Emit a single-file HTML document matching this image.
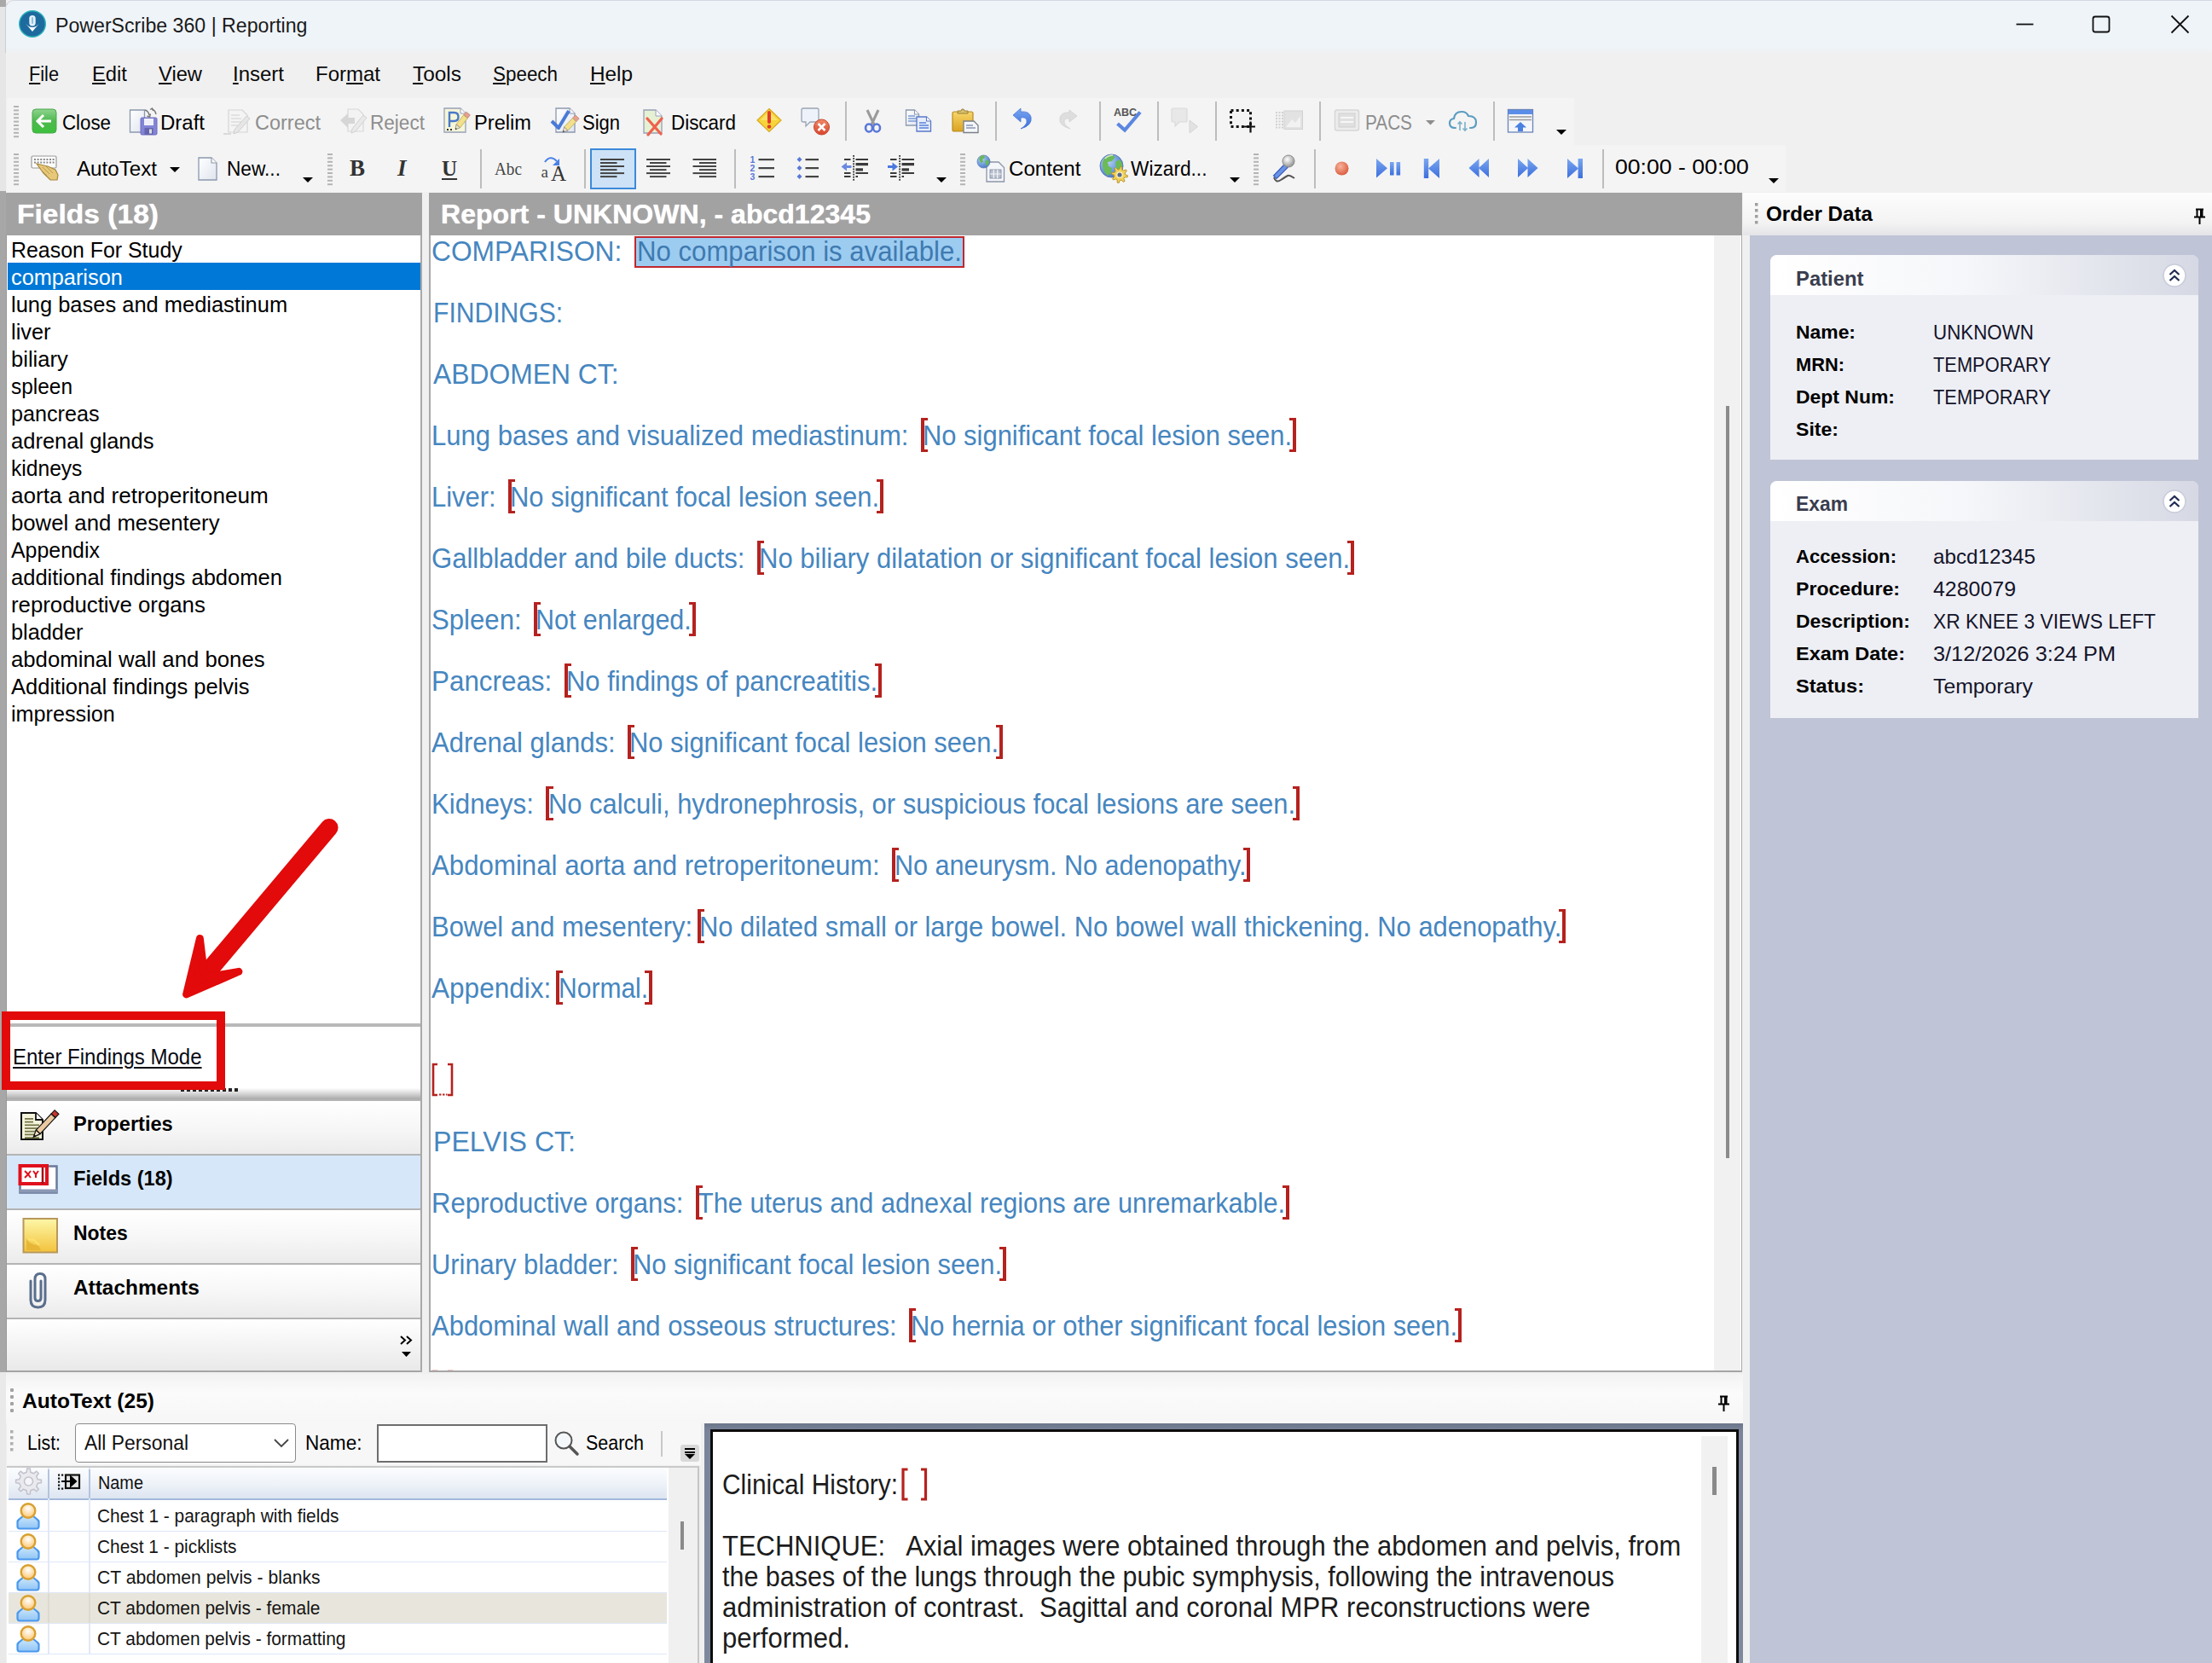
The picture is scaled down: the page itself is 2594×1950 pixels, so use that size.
<!DOCTYPE html>
<html><head><meta charset="utf-8"><title>PowerScribe 360 | Reporting</title><style>html,body{margin:0;padding:0;background:#f0f0f0;}
body{width:2594px;height:1950px;overflow:hidden;position:relative;font-family:"Liberation Sans",sans-serif;}
.r{position:absolute;display:block;}
.t{position:absolute;white-space:pre;transform-origin:0 50%;}
u{text-decoration:underline;text-decoration-thickness:2px;text-underline-offset:2px;}
</style></head><body>
<div class="r" style="left:0px;top:0px;width:2594px;height:1950px;background:#f0f0f0;"></div>
<div class="r" style="left:0px;top:0px;width:7px;height:8px;background:#a9a9a9;"></div>
<div class="r" style="left:0px;top:8px;width:7px;height:216px;background:#e6e6e6;"></div>
<div class="r" style="left:0px;top:224px;width:7px;height:1385px;background:#a7a7a7;"></div>
<div class="r" style="left:0px;top:1609px;width:7px;height:341px;background:#e9e9e9;"></div>
<div class="r" style="left:6px;top:0px;width:2588px;height:62px;background:linear-gradient(#eff4f9 0,#eff4f9 54px,#f0f0f0 62px);border-top-left-radius:10px;border-left:1px solid #c9ced6;border-top:1px solid #d5dae2;box-sizing:border-box;"></div>
<svg class="r" style="left:22px;top:12px;" width="34" height="34" viewBox="0 0 34 34"><circle cx="16" cy="16" r="15.3" fill="#1d6a9e" stroke="#2bb3bb" stroke-width="1.4"/><rect x="12.3" y="6" width="7.4" height="12.5" rx="3.7" fill="#e6f1fa"/><rect x="15" y="8" width="2" height="8" rx="1" fill="#8fc0e4"/><path d="M8 15.5q8 9 16 0l-8 9.5z" fill="#fff"/></svg>
<div class="t" style="left:65.0px;top:17.5px;font-size:24.6px;line-height:24.6px;color:#1a1a1a;transform:scaleX(0.9410);">PowerScribe 360 | Reporting</div>
<svg class="r" style="left:2350px;top:8px;" width="230" height="44" viewBox="0 0 230 44"><path d="M14.5 20.5h20" stroke="#111" stroke-width="1.8" fill="none"/><rect x="104.5" y="11.5" width="19" height="18" rx="2.5" fill="none" stroke="#111" stroke-width="1.8"/><path d="M196.5 10.5l20 20M216.5 10.5l-20 20" stroke="#111" stroke-width="1.8" fill="none"/></svg>
<div class="t" style="left:34.0px;top:75.1px;font-size:24.6px;line-height:24.6px;color:#0a0a0a;transform:scaleX(0.8837);"><u>F</u>ile</div>
<div class="t" style="left:108.0px;top:75.1px;font-size:24.6px;line-height:24.6px;color:#0a0a0a;transform:scaleX(0.9662);"><u>E</u>dit</div>
<div class="t" style="left:186.0px;top:75.1px;font-size:24.6px;line-height:24.6px;color:#0a0a0a;transform:scaleX(0.9643);"><u>V</u>iew</div>
<div class="t" style="left:273.0px;top:75.1px;font-size:24.6px;line-height:24.6px;color:#0a0a0a;transform:scaleX(0.9756);"><u>I</u>nsert</div>
<div class="t" style="left:370.0px;top:75.1px;font-size:24.6px;line-height:24.6px;color:#0a0a0a;transform:scaleX(0.9761);">For<u>m</u>at</div>
<div class="t" style="left:484.0px;top:75.1px;font-size:24.6px;line-height:24.6px;color:#0a0a0a;transform:scaleX(0.9923);"><u>T</u>ools</div>
<div class="t" style="left:578.0px;top:75.1px;font-size:24.6px;line-height:24.6px;color:#0a0a0a;transform:scaleX(0.9113);"><u>S</u>peech</div>
<div class="t" style="left:692.0px;top:75.1px;font-size:24.6px;line-height:24.6px;color:#0a0a0a;transform:scaleX(0.9891);"><u>H</u>elp</div>
<div class="r" style="left:8px;top:115px;width:1838px;height:55px;background:#f4f4f4;"></div>
<div class="r" style="left:8px;top:170px;width:2086px;height:55px;background:#f4f4f4;"></div>
<svg class="r" style="left:16px;top:124px;" width="7" height="40" viewBox="0 0 7 40"><rect x="0" y="0.0" width="6" height="2" fill="#b4b4b4"/><rect x="0" y="4.4" width="6" height="2" fill="#b4b4b4"/><rect x="0" y="8.8" width="6" height="2" fill="#b4b4b4"/><rect x="0" y="13.2" width="6" height="2" fill="#b4b4b4"/><rect x="0" y="17.6" width="6" height="2" fill="#b4b4b4"/><rect x="0" y="22.0" width="6" height="2" fill="#b4b4b4"/><rect x="0" y="26.4" width="6" height="2" fill="#b4b4b4"/><rect x="0" y="30.8" width="6" height="2" fill="#b4b4b4"/><rect x="0" y="35.2" width="6" height="2" fill="#b4b4b4"/></svg>
<svg class="r" style="left:16px;top:180px;" width="7" height="40" viewBox="0 0 7 40"><rect x="0" y="0.0" width="6" height="2" fill="#b4b4b4"/><rect x="0" y="4.4" width="6" height="2" fill="#b4b4b4"/><rect x="0" y="8.8" width="6" height="2" fill="#b4b4b4"/><rect x="0" y="13.2" width="6" height="2" fill="#b4b4b4"/><rect x="0" y="17.6" width="6" height="2" fill="#b4b4b4"/><rect x="0" y="22.0" width="6" height="2" fill="#b4b4b4"/><rect x="0" y="26.4" width="6" height="2" fill="#b4b4b4"/><rect x="0" y="30.8" width="6" height="2" fill="#b4b4b4"/><rect x="0" y="35.2" width="6" height="2" fill="#b4b4b4"/></svg>
<svg class="r" style="left:384px;top:180px;" width="7" height="40" viewBox="0 0 7 40"><rect x="0" y="0.0" width="6" height="2" fill="#b4b4b4"/><rect x="0" y="4.4" width="6" height="2" fill="#b4b4b4"/><rect x="0" y="8.8" width="6" height="2" fill="#b4b4b4"/><rect x="0" y="13.2" width="6" height="2" fill="#b4b4b4"/><rect x="0" y="17.6" width="6" height="2" fill="#b4b4b4"/><rect x="0" y="22.0" width="6" height="2" fill="#b4b4b4"/><rect x="0" y="26.4" width="6" height="2" fill="#b4b4b4"/><rect x="0" y="30.8" width="6" height="2" fill="#b4b4b4"/><rect x="0" y="35.2" width="6" height="2" fill="#b4b4b4"/></svg>
<svg class="r" style="left:1126px;top:180px;" width="7" height="40" viewBox="0 0 7 40"><rect x="0" y="0.0" width="6" height="2" fill="#b4b4b4"/><rect x="0" y="4.4" width="6" height="2" fill="#b4b4b4"/><rect x="0" y="8.8" width="6" height="2" fill="#b4b4b4"/><rect x="0" y="13.2" width="6" height="2" fill="#b4b4b4"/><rect x="0" y="17.6" width="6" height="2" fill="#b4b4b4"/><rect x="0" y="22.0" width="6" height="2" fill="#b4b4b4"/><rect x="0" y="26.4" width="6" height="2" fill="#b4b4b4"/><rect x="0" y="30.8" width="6" height="2" fill="#b4b4b4"/><rect x="0" y="35.2" width="6" height="2" fill="#b4b4b4"/></svg>
<svg class="r" style="left:1470px;top:180px;" width="7" height="40" viewBox="0 0 7 40"><rect x="0" y="0.0" width="6" height="2" fill="#b4b4b4"/><rect x="0" y="4.4" width="6" height="2" fill="#b4b4b4"/><rect x="0" y="8.8" width="6" height="2" fill="#b4b4b4"/><rect x="0" y="13.2" width="6" height="2" fill="#b4b4b4"/><rect x="0" y="17.6" width="6" height="2" fill="#b4b4b4"/><rect x="0" y="22.0" width="6" height="2" fill="#b4b4b4"/><rect x="0" y="26.4" width="6" height="2" fill="#b4b4b4"/><rect x="0" y="30.8" width="6" height="2" fill="#b4b4b4"/><rect x="0" y="35.2" width="6" height="2" fill="#b4b4b4"/></svg>
<div class="r" style="left:991px;top:119px;width:1.5px;height:46px;background:#bdbdbd;"></div>
<div class="r" style="left:1167px;top:119px;width:1.5px;height:46px;background:#bdbdbd;"></div>
<div class="r" style="left:1289px;top:119px;width:1.5px;height:46px;background:#bdbdbd;"></div>
<div class="r" style="left:1357px;top:119px;width:1.5px;height:46px;background:#bdbdbd;"></div>
<div class="r" style="left:1425px;top:119px;width:1.5px;height:46px;background:#bdbdbd;"></div>
<div class="r" style="left:1547px;top:119px;width:1.5px;height:46px;background:#bdbdbd;"></div>
<div class="r" style="left:1751px;top:119px;width:1.5px;height:46px;background:#bdbdbd;"></div>
<div class="r" style="left:563px;top:175px;width:1.5px;height:46px;background:#bdbdbd;"></div>
<div class="r" style="left:685px;top:175px;width:1.5px;height:46px;background:#bdbdbd;"></div>
<div class="r" style="left:861px;top:175px;width:1.5px;height:46px;background:#bdbdbd;"></div>
<div class="r" style="left:1541px;top:175px;width:1.5px;height:46px;background:#bdbdbd;"></div>
<div class="r" style="left:1879px;top:175px;width:1.5px;height:46px;background:#bdbdbd;"></div>
<div class="t" style="left:73.0px;top:131.9px;font-size:24.6px;line-height:24.6px;color:#000;transform:scaleX(0.9069);">Close</div>
<div class="t" style="left:188.0px;top:131.9px;font-size:24.6px;line-height:24.6px;color:#000;transform:scaleX(0.9764);">Draft</div>
<div class="t" style="left:299.0px;top:131.9px;font-size:24.6px;line-height:24.6px;color:#8d8d8d;transform:scaleX(0.9543);">Correct</div>
<div class="t" style="left:434.0px;top:131.9px;font-size:24.6px;line-height:24.6px;color:#8d8d8d;transform:scaleX(0.9177);">Reject</div>
<div class="t" style="left:556.0px;top:131.9px;font-size:24.6px;line-height:24.6px;color:#000;transform:scaleX(0.9607);">Prelim</div>
<div class="t" style="left:683.0px;top:131.9px;font-size:24.6px;line-height:24.6px;color:#000;transform:scaleX(0.8943);">Sign</div>
<div class="t" style="left:787.0px;top:131.9px;font-size:24.6px;line-height:24.6px;color:#000;transform:scaleX(0.9113);">Discard</div>
<div class="t" style="left:1601.0px;top:131.9px;font-size:24.6px;line-height:24.6px;color:#8d8d8d;transform:scaleX(0.8437);">PACS</div>
<svg class="r" style="left:1672px;top:141px;" width="11" height="6.5" viewBox="0 0 11 6.5"><path d="M0 0h11l-5.5 5.5z" fill="#8d8d8d"/></svg>
<svg class="r" style="left:1825px;top:152px;" width="12" height="7.0" viewBox="0 0 12 7.0"><path d="M0 0h12l-6.0 6.0z" fill="#000"/></svg>
<div class="t" style="left:90.0px;top:185.6px;font-size:24.6px;line-height:24.6px;color:#000;transform:scaleX(0.9823);">AutoText</div>
<div class="t" style="left:266.0px;top:185.6px;font-size:24.6px;line-height:24.6px;color:#000;transform:scaleX(0.9212);">New...</div>
<div class="t" style="left:1183.0px;top:185.6px;font-size:24.6px;line-height:24.6px;color:#000;transform:scaleX(0.9800);">Content</div>
<div class="t" style="left:1325.5px;top:185.6px;font-size:24.6px;line-height:24.6px;color:#000;transform:scaleX(0.9222);">Wizard...</div>
<div class="t" style="left:1894.0px;top:184.1px;font-size:24.6px;line-height:24.6px;color:#000;transform:scaleX(1.0826);">00:00 - 00:00</div>
<svg class="r" style="left:199px;top:196px;" width="12" height="7.0" viewBox="0 0 12 7.0"><path d="M0 0h12l-6.0 6.0z" fill="#000"/></svg>
<svg class="r" style="left:355px;top:208px;" width="12" height="7.0" viewBox="0 0 12 7.0"><path d="M0 0h12l-6.0 6.0z" fill="#000"/></svg>
<svg class="r" style="left:1098px;top:208px;" width="12" height="7.0" viewBox="0 0 12 7.0"><path d="M0 0h12l-6.0 6.0z" fill="#000"/></svg>
<svg class="r" style="left:1442px;top:208px;" width="12" height="7.0" viewBox="0 0 12 7.0"><path d="M0 0h12l-6.0 6.0z" fill="#000"/></svg>
<svg class="r" style="left:2074px;top:209px;" width="12" height="7.0" viewBox="0 0 12 7.0"><path d="M0 0h12l-6.0 6.0z" fill="#000"/></svg>
<div class="t" style="left:410.0px;top:184.1px;font-size:27px;line-height:27px;color:#333;font-weight:700;font-family:'Liberation Serif', serif;">B</div>
<div class="t" style="left:466.0px;top:184.1px;font-size:27px;line-height:27px;color:#333;font-weight:700;font-style:italic;font-family:'Liberation Serif', serif;">I</div>
<div class="t" style="left:518.0px;top:184.8px;font-size:25px;line-height:25px;color:#333;font-weight:700;font-family:'Liberation Serif', serif;text-decoration:underline;text-underline-offset:3px;text-decoration-thickness:2px;">U</div>
<div class="t" style="left:580.0px;top:188.2px;font-size:21px;line-height:21px;color:#444;font-family:'Liberation Serif', serif;transform:scaleX(0.9146);">Abc</div>
<div class="r" style="left:692px;top:174px;width:54px;height:48px;background:#cde2f6;border:2px solid #3b8ad9;box-sizing:border-box;"></div>
<svg class="r" style="left:0;top:0" width="2100" height="230" viewBox="0 0 2100 230"><defs>
<linearGradient id="gGreen" x1="0" y1="0" x2="0" y2="1"><stop offset="0" stop-color="#8fd48f"/><stop offset=".5" stop-color="#4db84d"/><stop offset="1" stop-color="#3cc23c"/></linearGradient>
<linearGradient id="gPage" x1="0" y1="0" x2="1" y2="1"><stop offset="0" stop-color="#ffffff"/><stop offset="1" stop-color="#dfe5ee"/></linearGradient>
<linearGradient id="gBlue" x1="0" y1="0" x2="0" y2="1"><stop offset="0" stop-color="#7aa6f0"/><stop offset="1" stop-color="#3b6fdc"/></linearGradient>
<linearGradient id="gYel" x1="0" y1="0" x2="0" y2="1"><stop offset="0" stop-color="#fdf7a8"/><stop offset="1" stop-color="#f3c23c"/></linearGradient>
<linearGradient id="gClip" x1="0" y1="0" x2="0" y2="1"><stop offset="0" stop-color="#f7d66a"/><stop offset="1" stop-color="#dba321"/></linearGradient>
<radialGradient id="gRec" cx=".4" cy=".35" r=".7"><stop offset="0" stop-color="#f7b49c"/><stop offset="1" stop-color="#d9583a"/></radialGradient>
<radialGradient id="gGlobe" cx=".35" cy=".3" r=".8"><stop offset="0" stop-color="#b8d4f4"/><stop offset=".6" stop-color="#6a98dc"/><stop offset="1" stop-color="#4a70b8"/></radialGradient>
<radialGradient id="gHead" cx=".5" cy=".35" r=".7"><stop offset="0" stop-color="#ffffff"/><stop offset="1" stop-color="#ffc060"/></radialGradient>
<linearGradient id="gBody" x1="0" y1="0" x2="0" y2="1"><stop offset="0" stop-color="#cfe8fb"/><stop offset="1" stop-color="#8fc4f6"/></linearGradient>
<radialGradient id="gMic" cx=".4" cy=".35" r=".7"><stop offset="0" stop-color="#ffffff"/><stop offset="1" stop-color="#8c8c8c"/></radialGradient>
<linearGradient id="gRedc" x1="0" y1="0" x2="0" y2="1"><stop offset="0" stop-color="#f08a6a"/><stop offset="1" stop-color="#d9452e"/></linearGradient>
</defs><rect x="38" y="128" width="28" height="28" rx="4" fill="url(#gGreen)" stroke="#4aa84a" stroke-width="1"/><path d="M60 142H45M51 135l-7 7 7 7" stroke="#fff" stroke-width="3" fill="none"/><path d="M152.5 129h17l0 0v26h-17z" fill="url(#gPage)" stroke="#8c98ae" stroke-width="1.3"/><path d="M169.5 129v0h0" fill="#fff" stroke="#8c98ae" stroke-width="1.1"/><rect x="165" y="138" width="19" height="20" rx="1.5" fill="#8484d6" stroke="#6a6ac0" stroke-width="1"/><rect x="169" y="139" width="11" height="8" fill="#f0f0fb"/><rect x="169.5" y="150" width="10" height="8" fill="#6464b0"/><rect x="175" y="151.5" width="3" height="5" fill="#ddd"/><path d="M170 129q4 1 5 6M172.5 136l3 1 1-3.5M183 134q-1-5-5-6M176 128.5l2.5-1.5 1 3" stroke="#777" stroke-width="1.4" fill="none"/><path d="M268 129h16l6 6v20h-22z" fill="#f4f4f4" stroke="#d4d4d4" stroke-width="1.2"/><path d="M271 135h10M271 139h12M271 143h12M271 147h9" stroke="#dcdcdc" stroke-width="1.4"/><path d="M293 139l-14 16-5 2 1-5 14-16z" fill="#e6e6e6" stroke="#d0d0d0" stroke-width="1"/><path d="M262 157h9" stroke="#d0d0d0" stroke-width="1.5"/><path d="M408 128h12l6 6v20h-18z" fill="#f3f3f3" stroke="#d8d8d8" stroke-width="1.2"/><path d="M399 141l9-8v5h8v7h-8v5z" fill="#d6d6d6"/><path d="M430 138l-13 16-5 2 1-5 13-16z" fill="#e9e9e9" stroke="#d2d2d2" stroke-width="1"/><path d="M521 127h19l6 6v22h-25z" fill="#f5f6d8" stroke="#98a0b8" stroke-width="1.3"/><path d="M540 127v6h6" fill="#fff" stroke="#98a0b8" stroke-width="1"/><path d="M527 149v-17h5.5q5 0 5 5t-5 5h-5.5" stroke="#4a78c8" stroke-width="2.4" fill="none"/><path d="M524 152h2M528 152h2" stroke="#333" stroke-width="2"/><g transform="translate(549 133) rotate(128.29016319224309)"><rect x="0" y="-3.0" width="4.8" height="6" fill="#e8a090" stroke="#b07868" stroke-width=".6"/><rect x="4.8" y="-3.0" width="14.0" height="6" fill="#f3e08a" stroke="#a89850" stroke-width=".6"/><path d="M18.9 -3.0L24.2 0L18.9 3.0z" fill="#f1e3c8" stroke="#777" stroke-width=".6"/><path d="M22.3 -1.08L24.2 0L22.3 1.08z" fill="#333"/></g><path d="M652 127h16l6 6v22h-22z" fill="url(#gPage)" stroke="#8c98ae" stroke-width="1.3"/><path d="M668 127v6h6" fill="#fff" stroke="#8c98ae" stroke-width="1.1"/><path d="M647 142l8 8 12-20" stroke="#4a7ad6" stroke-width="4" fill="none" stroke-linejoin="round"/><g transform="translate(677 137) rotate(133.36342295838327)"><rect x="0" y="-3.0" width="5.0" height="6" fill="#e8a090" stroke="#b07868" stroke-width=".6"/><rect x="5.0" y="-3.0" width="14.4" height="6" fill="#f3e08a" stroke="#a89850" stroke-width=".6"/><path d="M19.3 -3.0L24.8 0L19.3 3.0z" fill="#f1e3c8" stroke="#777" stroke-width=".6"/><path d="M22.8 -1.08L24.8 0L22.8 1.08z" fill="#333"/></g><path d="M755 129h14l7 7v20h-21z" fill="#e6f1d3" stroke="#98a0b8" stroke-width="1.3"/><path d="M769 129v7h7" fill="#fff" stroke="#98a0b8" stroke-width="1"/><path d="M759 139l16 18M776 139l-16 19" stroke="#f0604e" stroke-width="3.2" fill="none" stroke-linecap="round"/><path d="M902 127.5l14 13.5-14 13.5-14-13.5z" fill="#f6d43a" stroke="#d9a820" stroke-width="1.2"/><path d="M902 130.5l10 10.5h-20z" fill="#fbe87a" opacity=".7"/><path d="M902 132v11" stroke="#e03a2a" stroke-width="4" stroke-linecap="round"/><circle cx="902" cy="148.5" r="2.3" fill="#e03a2a"/><path d="M942 127h16q2 0 2 2v12q0 2-2 2h-8l-5 5v-5h-3q-2 0-2-2v-12q0-2 2-2z" fill="#eef3fb" stroke="#9aa4b4" stroke-width="1.3"/><circle cx="963.5" cy="149" r="9" fill="url(#gRedc)" stroke="#c8442c" stroke-width="1"/><path d="M959.5 145l8 8M967.5 145l-8 8" stroke="#fff" stroke-width="2.6"/><path d="M1017 129l8 17M1030 129l-8 17" stroke="#9a9a9a" stroke-width="3"/><ellipse cx="1019" cy="150" rx="4" ry="4.5" fill="none" stroke="#5a78d8" stroke-width="2.6"/><ellipse cx="1028" cy="150" rx="4" ry="4.5" fill="none" stroke="#5a78d8" stroke-width="2.6"/><path d="M1062.5 129h10l5 5v13h-15z" fill="url(#gPage)" stroke="#8c98ae" stroke-width="1.3"/><path d="M1072.5 129v5h5" fill="#fff" stroke="#8c98ae" stroke-width="1.1"/><path d="M1065 136h8M1065 139h10M1065 142h10" stroke="#7a9ad8" stroke-width="1.3"/><path d="M1075 137h11.5l5 5v12h-16.5z" fill="#e6edfb" stroke="#5a78c8" stroke-width="1.3"/><path d="M1086.5 137v5h5" fill="#fff" stroke="#5a78c8" stroke-width="1.1"/><path d="M1078 144h8M1078 147h11M1078 150h11" stroke="#5a80d8" stroke-width="1.5"/><rect x="1117" y="131" width="24" height="23" rx="2" fill="url(#gClip)" stroke="#b88a20" stroke-width="1.2"/><path d="M1123 133v-3h4l1-2h2l1 2h4v3z" fill="#d8c070" stroke="#9a8030" stroke-width="1"/><path d="M1130 142h12l5 5v8.5h-17z" fill="#f4f6fa" stroke="#7a8088" stroke-width="1.3"/><path d="M1133 147h8M1133 150h11" stroke="#8a96b0" stroke-width="1.3"/><path d="M1197 151q14-4 12-14q-2-7-12-6v-4l-9 8 9 8v-5q6-1 7 3q1 5-7 10z" fill="url(#gBlue)" stroke="#4a78d8" stroke-width=".8"/><path d="M1255 151q-14-4-12-13q2-7 11-6v-3l9 7-9 7v-4q-5-1-6 3q-1 4 7 9z" fill="#dedede" stroke="#d0d0d0" stroke-width=".8"/><text x="1306" y="135.5" font-family="Liberation Sans, sans-serif" font-size="12.5" font-weight="700" fill="#555" textLength="27">ABC</text><path d="M1310.5 145l8.5 7.5 18-21" stroke="#5b86e0" stroke-width="4.2" fill="none" stroke-linejoin="miter"/><path d="M1376 127h14q2 0 2 2v12q0 2-2 2h-7l-5 5v-5h-2q-2 0-2-2v-12q0-2 2-2z" fill="#e8e8e8" stroke="#dadada" stroke-width="1.2"/><path d="M1395 141l9.5 7.5-9.5 7.5z" fill="#e2e2e2" stroke="#d4d4d4" stroke-width="1"/><rect x="1443.5" y="129.5" width="23" height="19" fill="none" stroke="#111" stroke-width="3" stroke-dasharray="3 3.2"/><path d="M1459 148.5h13M1466.5 142.5v13" stroke="#111" stroke-width="2.2"/><rect x="1506" y="130" width="21.5" height="21.5" fill="#e2e2e2" stroke="#d2d2d2" stroke-width="1"/><path d="M1508 149l7-9 4 4 6-8v13z" fill="#f2f2f2"/><rect x="1496.0" y="131.0" width="2" height="2" fill="#d0d0d0"/><rect x="1496.0" y="134.5" width="2" height="2" fill="#d0d0d0"/><rect x="1496.0" y="138.0" width="2" height="2" fill="#d0d0d0"/><rect x="1496.0" y="141.5" width="2" height="2" fill="#d0d0d0"/><rect x="1496.0" y="145.0" width="2" height="2" fill="#d0d0d0"/><rect x="1496.0" y="148.5" width="2" height="2" fill="#d0d0d0"/><rect x="1499.5" y="131.0" width="2" height="2" fill="#d0d0d0"/><rect x="1499.5" y="134.5" width="2" height="2" fill="#d0d0d0"/><rect x="1499.5" y="138.0" width="2" height="2" fill="#d0d0d0"/><rect x="1499.5" y="141.5" width="2" height="2" fill="#d0d0d0"/><rect x="1499.5" y="145.0" width="2" height="2" fill="#d0d0d0"/><rect x="1499.5" y="148.5" width="2" height="2" fill="#d0d0d0"/><rect x="1503.0" y="131.0" width="2" height="2" fill="#d0d0d0"/><rect x="1503.0" y="134.5" width="2" height="2" fill="#d0d0d0"/><rect x="1503.0" y="138.0" width="2" height="2" fill="#d0d0d0"/><rect x="1503.0" y="141.5" width="2" height="2" fill="#d0d0d0"/><rect x="1503.0" y="145.0" width="2" height="2" fill="#d0d0d0"/><rect x="1503.0" y="148.5" width="2" height="2" fill="#d0d0d0"/><rect x="1565.5" y="129" width="28" height="24" rx="2.5" fill="#ececec" stroke="#d6d6d6" stroke-width="1.5"/><rect x="1570" y="133" width="19" height="16" fill="#e0e0e0" stroke="#d0d0d0" stroke-width="1"/><path d="M1572 138h15M1572 143h15" stroke="#f6f6f6" stroke-width="2"/><path d="M1707 150h-1q-6 0-6-5.5q0-5 5-5.5q1-8 9-8q6 0 8 5q9 0 9 7.5q0 6.500-6 6.500h-1" fill="none" stroke="#5b9cc0" stroke-width="2.2" stroke-linecap="round"/><path d="M1712 143v10M1709.500 145.500l2.500-2.500 2.500 2.500M1718 143v10M1715.500 150.500l2.500 2.500 2.500-2.500" stroke="#7ab0c8" stroke-width="1.6" fill="none"/><rect x="1768.500" y="128.500" width="29" height="26.500" fill="#f4f6fa" stroke="#6a84b8" stroke-width="1.3"/><rect x="1769" y="129" width="28" height="5" fill="#5b8ee8"/><path d="M1770 137h26M1770 140.500h26" stroke="#9a9a9a" stroke-width="1.4"/><path d="M1783 143l7 6.500h-4v4.500h-6v-4.500h-4z" fill="#4a80e0"/><rect x="37" y="183" width="29" height="14" rx="1.5" fill="#fdfdfd" stroke="#9a9a9a" stroke-width="1.2"/><rect x="40.0" y="186.0" width="2" height="2" fill="#8a8a8a"/><rect x="40.0" y="189.5" width="2" height="2" fill="#8a8a8a"/><rect x="43.6" y="186.0" width="2" height="2" fill="#8a8a8a"/><rect x="43.6" y="189.5" width="2" height="2" fill="#8a8a8a"/><rect x="47.2" y="186.0" width="2" height="2" fill="#8a8a8a"/><rect x="47.2" y="189.5" width="2" height="2" fill="#8a8a8a"/><rect x="50.8" y="186.0" width="2" height="2" fill="#8a8a8a"/><rect x="50.8" y="189.5" width="2" height="2" fill="#8a8a8a"/><rect x="54.4" y="186.0" width="2" height="2" fill="#8a8a8a"/><rect x="54.4" y="189.5" width="2" height="2" fill="#8a8a8a"/><rect x="58.0" y="186.0" width="2" height="2" fill="#8a8a8a"/><rect x="58.0" y="189.5" width="2" height="2" fill="#8a8a8a"/><rect x="61.6" y="186.0" width="2" height="2" fill="#8a8a8a"/><rect x="61.6" y="189.5" width="2" height="2" fill="#8a8a8a"/><path d="M43 192l13 3 9 4 3 6-1 6-8 0-8-8z" fill="#e6c878" stroke="#a88840" stroke-width="1.2"/><path d="M50 196l8 8M54 195l8 8M47 198l8 8" stroke="#b89850" stroke-width="1"/><path d="M233 185h15l6 6v20h-21z" fill="url(#gPage)" stroke="#8c98ae" stroke-width="1.3"/><path d="M248 185v6h6" fill="#fff" stroke="#8c98ae" stroke-width="1.1"/><text x="634.500" y="207.500" font-family="Liberation Serif, serif" font-size="19" fill="#444">a</text><text x="646" y="211.500" font-family="Liberation Serif, serif" font-size="25" fill="#333">A</text><path d="M639 190q6-9 14-1" stroke="#4a80e8" stroke-width="2" fill="none"/><path d="M656 186v8h-8z" fill="#4a80e8"/><rect x="704" y="186.0" width="28" height="2" fill="#444"/><rect x="704" y="190.0" width="19.5" height="2" fill="#444"/><rect x="704" y="194.0" width="28" height="2" fill="#444"/><rect x="704" y="198.1" width="19.5" height="2" fill="#444"/><rect x="704" y="202.1" width="28" height="2" fill="#444"/><rect x="704" y="206.1" width="19.5" height="2" fill="#444"/><rect x="758" y="186.0" width="28" height="2" fill="#444"/><rect x="762" y="190.0" width="19.5" height="2" fill="#444"/><rect x="758" y="194.0" width="28" height="2" fill="#444"/><rect x="762" y="198.1" width="19.5" height="2" fill="#444"/><rect x="758" y="202.1" width="28" height="2" fill="#444"/><rect x="762" y="206.1" width="19.5" height="2" fill="#444"/><rect x="812.5" y="186.0" width="27.5" height="2" fill="#444"/><rect x="820" y="190.0" width="20" height="2" fill="#444"/><rect x="812.5" y="194.0" width="27.5" height="2" fill="#444"/><rect x="820" y="198.1" width="20" height="2" fill="#444"/><rect x="812.5" y="202.1" width="27.5" height="2" fill="#444"/><rect x="820" y="206.1" width="20" height="2" fill="#444"/><text x="879.500" y="190.5" font-family="Liberation Sans, sans-serif" font-size="10.500" font-weight="700" fill="#5a78d8">1</text><rect x="889.500" y="186" width="18.500" height="2.200" fill="#444"/><path d="M937.500 184l3 3-3 3-3-3z" fill="#5a78d8"/><rect x="944.500" y="186" width="15.500" height="2.200" fill="#444"/><text x="879.500" y="200.5" font-family="Liberation Sans, sans-serif" font-size="10.500" font-weight="700" fill="#5a78d8">2</text><rect x="889.500" y="196" width="18.500" height="2.200" fill="#444"/><path d="M937.500 194l3 3-3 3-3-3z" fill="#5a78d8"/><rect x="944.500" y="196" width="15.500" height="2.200" fill="#444"/><text x="879.500" y="210.5" font-family="Liberation Sans, sans-serif" font-size="10.500" font-weight="700" fill="#5a78d8">3</text><rect x="889.500" y="206" width="18.500" height="2.200" fill="#444"/><path d="M937.500 204l3 3-3 3-3-3z" fill="#5a78d8"/><rect x="944.500" y="206" width="15.500" height="2.200" fill="#444"/><rect x="1000.2" y="182.0" width="1.800" height="1.800" fill="#333"/><rect x="1000.2" y="185.1" width="1.800" height="1.800" fill="#333"/><rect x="1000.2" y="188.2" width="1.800" height="1.800" fill="#333"/><rect x="1000.2" y="191.3" width="1.800" height="1.800" fill="#333"/><rect x="1000.2" y="194.4" width="1.800" height="1.800" fill="#333"/><rect x="1000.2" y="197.5" width="1.800" height="1.800" fill="#333"/><rect x="1000.2" y="200.6" width="1.800" height="1.800" fill="#333"/><rect x="1000.2" y="203.7" width="1.800" height="1.800" fill="#333"/><rect x="1000.2" y="206.8" width="1.800" height="1.800" fill="#333"/><rect x="1000.2" y="209.9" width="1.800" height="1.800" fill="#333"/><rect x="1003.5" y="186" width="14.5" height="2" fill="#3a3a3a"/><rect x="1003.5" y="191" width="14.5" height="3.2" fill="#3a3a3a"/><rect x="1003.5" y="197.3" width="8.5" height="3.2" fill="#3a3a3a"/><rect x="1003.5" y="202" width="14.5" height="2" fill="#3a3a3a"/><rect x="1003.5" y="206" width="2.5" height="2" fill="#3a3a3a"/><rect x="990.0" y="186" width="7.500" height="2" fill="#3a3a3a"/><rect x="990.0" y="202" width="7.500" height="2" fill="#3a3a3a"/><rect x="990.0" y="206" width="7.500" height="2" fill="#3a3a3a"/><path d="M986.5 195.500l6.500-5v3.500h5.500v3h-5.500v3.500z" fill="#6a8ae0"/><rect x="1054.2" y="182.0" width="1.800" height="1.800" fill="#333"/><rect x="1054.2" y="185.1" width="1.800" height="1.800" fill="#333"/><rect x="1054.2" y="188.2" width="1.800" height="1.800" fill="#333"/><rect x="1054.2" y="191.3" width="1.800" height="1.800" fill="#333"/><rect x="1054.2" y="194.4" width="1.800" height="1.800" fill="#333"/><rect x="1054.2" y="197.5" width="1.800" height="1.800" fill="#333"/><rect x="1054.2" y="200.6" width="1.800" height="1.800" fill="#333"/><rect x="1054.2" y="203.7" width="1.800" height="1.800" fill="#333"/><rect x="1054.2" y="206.8" width="1.800" height="1.800" fill="#333"/><rect x="1054.2" y="209.9" width="1.800" height="1.800" fill="#333"/><rect x="1057.5" y="186" width="14.5" height="2" fill="#3a3a3a"/><rect x="1057.5" y="191" width="14.5" height="3.2" fill="#3a3a3a"/><rect x="1057.5" y="197.3" width="8.5" height="3.2" fill="#3a3a3a"/><rect x="1057.5" y="202" width="14.5" height="2" fill="#3a3a3a"/><rect x="1057.5" y="206" width="2.5" height="2" fill="#3a3a3a"/><rect x="1044.0" y="186" width="7.500" height="2" fill="#3a3a3a"/><rect x="1044.0" y="202" width="7.500" height="2" fill="#3a3a3a"/><rect x="1044.0" y="206" width="7.500" height="2" fill="#3a3a3a"/><path d="M1053.0 195.500l-6.500-5v3.500h-5.500v3h5.500v3.500z" fill="#4a78e0"/><path d="M1157 190h14l6.500 6.500v16.500h-20.500z" fill="#f4f6fa" stroke="#8a94a8" stroke-width="1.300"/><rect x="1161" y="199" width="13" height="10" fill="#b8c0cc" stroke="#8a94a8" stroke-width="1"/><path d="M1161 204h13M1165.300 199v10M1169.700 199v10" stroke="#f4f6fa" stroke-width="1.200"/><circle cx="1153.500" cy="189.500" r="7.500" fill="url(#gGlobe)" stroke="#5a80b8" stroke-width=".8"/><path d="M1148 186q2-4 6-4l1 3-3 2 1 3-3 1zM1155 189l4-2 1 4-3 4z" fill="#6ab85a"/><circle cx="1303.500" cy="194.500" r="13.500" fill="url(#gGlobe)" stroke="#5a7ab8" stroke-width="1"/><path d="M1293 190q3-8 11-8l4 2-4 5-5 1 1 5 4 2-1 6-4 3q-7-6-6-16zM1308 190l5-3q4 4 3 10l-5 5-2-6z" fill="#6cba58"/><path d="M1296 186q4-4 9-4" stroke="#d4ecb4" stroke-width="1.500" fill="none"/><path d="M1322.5 205.9L1322.1 207.8L1318.9 207.8L1317.8 209.4L1319.0 212.4L1317.4 213.4L1315.2 211.1L1313.3 211.5L1312.1 214.5L1310.2 214.1L1310.2 210.9L1308.6 209.8L1305.6 211.0L1304.6 209.4L1306.9 207.2L1306.5 205.3L1303.5 204.1L1303.9 202.2L1307.1 202.2L1308.2 200.6L1307.0 197.6L1308.6 196.6L1310.8 198.9L1312.7 198.5L1313.9 195.5L1315.8 195.9L1315.8 199.1L1317.4 200.2L1320.4 199.0L1321.4 200.6L1319.1 202.8L1319.5 204.7z" fill="#f2d25a" stroke="#b89428" stroke-width="1"/><circle cx="1313" cy="205" r="3.200" fill="#5a6a8a" stroke="#fff6c8" stroke-width="1.200"/><path d="M1494 208q2 7 8 3t8-5t8 3" stroke="#555" stroke-width="2" fill="none"/><path d="M1506.500 192.500l3.500 4-13 13-3.500-3.500z" fill="#6a94e8" stroke="#3a5cb8" stroke-width="1.200"/><circle cx="1511" cy="189" r="7" fill="url(#gMic)" stroke="#888" stroke-width="1"/><circle cx="1573.500" cy="197.500" r="8" fill="url(#gRec)"/><path d="M1614 186l13 11.300-13 11.300z" fill="url(#gBlue)"/><rect x="1630" y="190" width="4.600" height="15.500" fill="url(#gBlue)"/><rect x="1637.500" y="190" width="4.600" height="15.500" fill="url(#gBlue)"/><rect x="1669.800" y="186" width="5.400" height="23" fill="url(#gBlue)"/><path d="M1688 186v23l-13-11.500z" fill="url(#gBlue)"/><path d="M1734.500 186v22l-12-11zM1746 186v22l-12-11z" fill="url(#gBlue)"/><path d="M1780 186v22l12-11zM1791.500 186v22l12-11z" fill="url(#gBlue)"/><path d="M1838 186v23l13-11.500z" fill="url(#gBlue)"/><rect x="1850.600" y="186" width="5.400" height="23" fill="url(#gBlue)"/></svg>
<div class="r" style="left:7px;top:226px;width:488px;height:50px;background:#a2a2a2;"></div>
<div class="r" style="left:503px;top:226px;width:1540px;height:50px;background:#a2a2a2;"></div>
<div class="t" style="left:20.0px;top:235.7px;font-size:31.5px;line-height:31.5px;color:#fff;font-weight:700;transform:scaleX(1.0655);text-shadow:0 0 1px #fff;">Fields (18)</div>
<div class="t" style="left:517.0px;top:235.7px;font-size:31.5px;line-height:31.5px;color:#fff;font-weight:700;transform:scaleX(1.0175);text-shadow:0 0 1px #fff;">Report - UNKNOWN, - abcd12345</div>
<div class="r" style="left:7px;top:276px;width:488px;height:1333px;background:#fff;border-left:1.5px solid #9a9a9a;border-right:2px solid #a9a9a9;box-sizing:border-box;"></div>
<div class="r" style="left:495px;top:226px;width:8px;height:1384px;background:#f0f0f0;"></div>
<div class="r" style="left:9px;top:308px;width:484px;height:32px;background:#0078d7;"></div>
<div class="t" style="left:13.2px;top:280.8px;font-size:25px;line-height:25px;color:#000;transform:scaleX(0.9960);">Reason For Study</div>
<div class="t" style="left:13.2px;top:312.8px;font-size:25px;line-height:25px;color:#fff;transform:scaleX(1.0120);">comparison</div>
<div class="t" style="left:13.2px;top:344.8px;font-size:25px;line-height:25px;color:#000;transform:scaleX(1.0184);">lung bases and mediastinum</div>
<div class="t" style="left:13.2px;top:376.8px;font-size:25px;line-height:25px;color:#000;transform:scaleX(1.0136);">liver</div>
<div class="t" style="left:13.2px;top:408.8px;font-size:25px;line-height:25px;color:#000;transform:scaleX(1.0222);">biliary</div>
<div class="t" style="left:13.2px;top:440.8px;font-size:25px;line-height:25px;color:#000;transform:scaleX(0.9779);">spleen</div>
<div class="t" style="left:13.2px;top:472.8px;font-size:25px;line-height:25px;color:#000;transform:scaleX(1.0061);">pancreas</div>
<div class="t" style="left:13.2px;top:504.8px;font-size:25px;line-height:25px;color:#000;transform:scaleX(1.0213);">adrenal glands</div>
<div class="t" style="left:13.2px;top:536.8px;font-size:25px;line-height:25px;color:#000;transform:scaleX(0.9841);">kidneys</div>
<div class="t" style="left:13.2px;top:568.8px;font-size:25px;line-height:25px;color:#000;transform:scaleX(1.0435);">aorta and retroperitoneum</div>
<div class="t" style="left:13.2px;top:600.8px;font-size:25px;line-height:25px;color:#000;transform:scaleX(1.0289);">bowel and mesentery</div>
<div class="t" style="left:13.2px;top:632.8px;font-size:25px;line-height:25px;color:#000;transform:scaleX(0.9966);">Appendix</div>
<div class="t" style="left:13.2px;top:664.8px;font-size:25px;line-height:25px;color:#000;transform:scaleX(1.0210);">additional findings abdomen</div>
<div class="t" style="left:13.2px;top:696.8px;font-size:25px;line-height:25px;color:#000;transform:scaleX(1.0308);">reproductive organs</div>
<div class="t" style="left:13.2px;top:728.8px;font-size:25px;line-height:25px;color:#000;transform:scaleX(1.0123);">bladder</div>
<div class="t" style="left:13.2px;top:760.8px;font-size:25px;line-height:25px;color:#000;transform:scaleX(1.0293);">abdominal wall and bones</div>
<div class="t" style="left:13.2px;top:792.8px;font-size:25px;line-height:25px;color:#000;transform:scaleX(1.0210);">Additional findings pelvis</div>
<div class="t" style="left:13.2px;top:824.8px;font-size:25px;line-height:25px;color:#000;transform:scaleX(1.0077);">impression</div>
<div class="r" style="left:8px;top:1200px;width:485px;height:3.5px;background:#b9b9b9;"></div>
<div class="t" style="left:14.5px;top:1226.8px;font-size:25px;line-height:25px;color:#0a0a14;transform:scaleX(0.9604);text-decoration:underline;text-decoration-thickness:2px;text-underline-offset:3px;">Enter Findings Mode</div>
<div class="r" style="left:8px;top:1276px;width:485px;height:13px;background:linear-gradient(#fdfdfd,#d9d9d9 45%,#a9a9a9);"></div>
<svg class="r" style="left:212px;top:1276px;" width="70" height="6" viewBox="0 0 70 6"><rect x="0" y="0" width="4" height="4" fill="#222"/><rect x="1" y="1" width="4" height="4" fill="#fff" opacity=".0"/><rect x="7" y="0" width="4" height="4" fill="#222"/><rect x="8" y="1" width="4" height="4" fill="#fff" opacity=".0"/><rect x="14" y="0" width="4" height="4" fill="#222"/><rect x="15" y="1" width="4" height="4" fill="#fff" opacity=".0"/><rect x="21" y="0" width="4" height="4" fill="#222"/><rect x="22" y="1" width="4" height="4" fill="#fff" opacity=".0"/><rect x="28" y="0" width="4" height="4" fill="#222"/><rect x="29" y="1" width="4" height="4" fill="#fff" opacity=".0"/><rect x="35" y="0" width="4" height="4" fill="#222"/><rect x="36" y="1" width="4" height="4" fill="#fff" opacity=".0"/><rect x="42" y="0" width="4" height="4" fill="#222"/><rect x="43" y="1" width="4" height="4" fill="#fff" opacity=".0"/><rect x="49" y="0" width="4" height="4" fill="#222"/><rect x="50" y="1" width="4" height="4" fill="#fff" opacity=".0"/><rect x="56" y="0" width="4" height="4" fill="#222"/><rect x="57" y="1" width="4" height="4" fill="#fff" opacity=".0"/><rect x="63" y="0" width="4" height="4" fill="#222"/><rect x="64" y="1" width="4" height="4" fill="#fff" opacity=".0"/></svg>
<div class="r" style="left:8px;top:1289px;width:485px;height:64px;background:linear-gradient(#ffffff,#f7f7f7 50%,#ebebeb);border-top:2px solid #b4b4b4;box-sizing:border-box;"></div>
<div class="t" style="left:86.3px;top:1307.2px;font-size:23.5px;line-height:23.5px;color:#000;font-weight:700;transform:scaleX(1.0042);">Properties</div>
<div class="r" style="left:8px;top:1353px;width:485px;height:64px;background:#d6e7f9;border-top:2px solid #b4b4b4;box-sizing:border-box;"></div>
<div class="t" style="left:86.3px;top:1371.2px;font-size:23.5px;line-height:23.5px;color:#000;font-weight:700;transform:scaleX(1.0042);">Fields (18)</div>
<div class="r" style="left:8px;top:1417px;width:485px;height:64px;background:linear-gradient(#ffffff,#f7f7f7 50%,#ebebeb);border-top:2px solid #b4b4b4;box-sizing:border-box;"></div>
<div class="t" style="left:86.3px;top:1435.2px;font-size:23.5px;line-height:23.5px;color:#000;font-weight:700;transform:scaleX(0.9750);">Notes</div>
<div class="r" style="left:8px;top:1481px;width:485px;height:64px;background:linear-gradient(#ffffff,#f7f7f7 50%,#ebebeb);border-top:2px solid #b4b4b4;box-sizing:border-box;"></div>
<div class="t" style="left:86.3px;top:1499.2px;font-size:23.5px;line-height:23.5px;color:#000;font-weight:700;transform:scaleX(1.0380);">Attachments</div>
<div class="r" style="left:8px;top:1545px;width:485px;height:64px;background:linear-gradient(#ffffff,#f4f4f4 50%,#e9e9e9);border-top:2px solid #b4b4b4;border-bottom:2.5px solid #a5a5a5;box-sizing:border-box;"></div>
<svg class="r" style="left:468px;top:1565px;" width="18" height="30" viewBox="0 0 18 30"><path d="M2 2l5 4.5-5 4.5M9 2l5 4.5-5 4.5" stroke="#000" stroke-width="2" fill="none"/><path d="M3 20h11l-5.5 6z" fill="#000"/></svg>
<svg class="r" style="left:0;top:0" width="120" height="1560" viewBox="0 0 120 1560"><path d="M25 1305h17l8 8v23h-25z" fill="#f4f4dc" stroke="#111" stroke-width="2"/><path d="M42 1305v8h8" fill="#fff" stroke="#111" stroke-width="1.800"/><rect x="29" y="1311.0" width="10" height="1.800" fill="#77774a"/><rect x="29" y="1314.7" width="10" height="1.800" fill="#77774a"/><rect x="29" y="1318.4" width="17" height="1.800" fill="#77774a"/><rect x="29" y="1322.1" width="17" height="1.800" fill="#77774a"/><rect x="29" y="1325.8" width="17" height="1.800" fill="#77774a"/><rect x="29" y="1329.5" width="17" height="1.800" fill="#77774a"/><rect x="29" y="1333.2" width="17" height="1.800" fill="#77774a"/><g transform="translate(66.500 1304) rotate(133)"><rect x="0" y="-3.300" width="6" height="6.600" fill="#c8342c" stroke="#111" stroke-width="1.200"/><rect x="6" y="-3.300" width="26" height="6.600" fill="#eac8a0" stroke="#111" stroke-width="1.200"/><path d="M32 -3.300l8 3.300-8 3.300z" fill="#f2dcc0" stroke="#111" stroke-width="1.200"/><path d="M37 -1.300l3.500 1.300-3.500 1.300z" fill="#111"/></g><rect x="23.500" y="1367.500" width="43" height="31" fill="#fff" stroke="#6a7a9a" stroke-width="2.500"/><path d="M22.500 1396.500h45" stroke="#8a98b4" stroke-width="4"/><rect x="23.500" y="1367" width="31.500" height="21" fill="#fff" stroke="#e0101c" stroke-width="4"/><path d="M29 1373l4 4-4 4M36 1373l-3 4 3 4M39 1373l3 4 3-4M42 1377v4" stroke="#e0101c" stroke-width="2" fill="none"/><path d="M50 1369v19" stroke="#a01018" stroke-width="2.500"/><rect x="27.500" y="1429" width="39.500" height="39.500" fill="url(#gYel)" stroke="#b8985a" stroke-width="2"/><path d="M31 1452q4 8 14 8l3 6h-17z" fill="#e6b434" opacity=".9"/><path d="M32 1453l8 1 6 6" stroke="#fbe06a" stroke-width="2.500" fill="none"/><path d="M36 1502v22q0 9 8.500 9t8.500-9v-24q0-6.500-6-6.500t-6 6.500v22q0 3.500 3.500 3.500t3.500-3.500v-20" fill="none" stroke="#5a6e8c" stroke-width="3" stroke-linecap="round"/></svg>
<div class="r" style="left:503px;top:276px;width:1540px;height:1333px;background:#fff;border-left:2px solid #a9a9a9;border-right:1.5px solid #a9a9a9;border-bottom:2px solid #a5a5a5;box-sizing:border-box;"></div>
<div class="r" style="left:2010px;top:276px;width:31px;height:1331px;background:#f1f1f1;"></div>
<div class="r" style="left:2023.5px;top:476px;width:4.5px;height:882px;background:#8b8b8b;"></div>
<div class="r" style="left:0;top:276px;width:2043px;height:1331px;overflow:hidden"><div class="r" style="left:0;top:-276px;"><div class="r" style="left:744px;top:276.5px;width:386.5px;height:37.5px;background:#9dccf1;border:2px solid #c0272d;box-sizing:border-box;"></div><div class="t" style="left:505.5px;top:277.5px;font-size:33.5px;line-height:33.5px;color:#4686bf;transform:scaleX(0.9474);">COMPARISON:  </div><div class="t" style="left:746.5px;top:277.5px;font-size:33.5px;line-height:33.5px;color:#3f7ab0;transform:scaleX(0.9301);">No comparison is available.</div><div class="t" style="left:507.5px;top:349.5px;font-size:33.5px;line-height:33.5px;color:#4686bf;transform:scaleX(0.8982);">FINDINGS:</div><div class="t" style="left:507.5px;top:421.5px;font-size:33.5px;line-height:33.5px;color:#4686bf;transform:scaleX(0.9499);">ABDOMEN CT:</div><div class="t" style="left:505.5px;top:493.5px;font-size:33.5px;line-height:33.5px;color:#4686bf;transform:scaleX(0.9272);">Lung bases and visualized mediastinum:  </div><div class="t" style="left:1082.2px;top:493.5px;font-size:33.5px;line-height:33.5px;color:#4686bf;transform:scaleX(0.9229);">No significant focal lesion seen.</div><div class="r" style="left:1079.7px;top:490px;width:8.3px;height:40px;background:transparent;border:3.4px solid #b5221f;border-left-width:4.2px;border-right:none;box-sizing:border-box;"></div><div class="r" style="left:1512.0px;top:490px;width:8.3px;height:40px;background:transparent;border:3.4px solid #b5221f;border-right-width:4.2px;border-left:none;box-sizing:border-box;"></div><div class="t" style="left:505.5px;top:565.5px;font-size:33.5px;line-height:33.5px;color:#4686bf;transform:scaleX(0.9231);">Liver:  </div><div class="t" style="left:598.3px;top:565.5px;font-size:33.5px;line-height:33.5px;color:#4686bf;transform:scaleX(0.9227);">No significant focal lesion seen.</div><div class="r" style="left:595.8px;top:562px;width:8.3px;height:40px;background:transparent;border:3.4px solid #b5221f;border-left-width:4.2px;border-right:none;box-sizing:border-box;"></div><div class="r" style="left:1028.0px;top:562px;width:8.3px;height:40px;background:transparent;border:3.4px solid #b5221f;border-right-width:4.2px;border-left:none;box-sizing:border-box;"></div><div class="t" style="left:505.5px;top:637.5px;font-size:33.5px;line-height:33.5px;color:#4686bf;transform:scaleX(0.9263);">Gallbladder and bile ducts:  </div><div class="t" style="left:890.2px;top:637.5px;font-size:33.5px;line-height:33.5px;color:#4686bf;transform:scaleX(0.9258);">No biliary dilatation or significant focal lesion seen.</div><div class="r" style="left:887.7px;top:634px;width:8.3px;height:40px;background:transparent;border:3.4px solid #b5221f;border-left-width:4.2px;border-right:none;box-sizing:border-box;"></div><div class="r" style="left:1579.9px;top:634px;width:8.3px;height:40px;background:transparent;border:3.4px solid #b5221f;border-right-width:4.2px;border-left:none;box-sizing:border-box;"></div><div class="t" style="left:505.5px;top:709.5px;font-size:33.5px;line-height:33.5px;color:#4686bf;transform:scaleX(0.9294);">Spleen:  </div><div class="t" style="left:628.4px;top:709.5px;font-size:33.5px;line-height:33.5px;color:#4686bf;transform:scaleX(0.9083);">Not enlarged.</div><div class="r" style="left:625.9px;top:706px;width:8.3px;height:40px;background:transparent;border:3.4px solid #b5221f;border-left-width:4.2px;border-right:none;box-sizing:border-box;"></div><div class="r" style="left:807.8000000000001px;top:706px;width:8.3px;height:40px;background:transparent;border:3.4px solid #b5221f;border-right-width:4.2px;border-left:none;box-sizing:border-box;"></div><div class="t" style="left:505.5px;top:781.5px;font-size:33.5px;line-height:33.5px;color:#4686bf;transform:scaleX(0.9366);">Pancreas:  </div><div class="t" style="left:664.2px;top:781.5px;font-size:33.5px;line-height:33.5px;color:#4686bf;transform:scaleX(0.9246);">No findings of pancreatitis.</div><div class="r" style="left:661.7px;top:778px;width:8.3px;height:40px;background:transparent;border:3.4px solid #b5221f;border-left-width:4.2px;border-right:none;box-sizing:border-box;"></div><div class="r" style="left:1025.9px;top:778px;width:8.3px;height:40px;background:transparent;border:3.4px solid #b5221f;border-right-width:4.2px;border-left:none;box-sizing:border-box;"></div><div class="t" style="left:505.5px;top:853.5px;font-size:33.5px;line-height:33.5px;color:#4686bf;transform:scaleX(0.9259);">Adrenal glands:  </div><div class="t" style="left:738.3px;top:853.5px;font-size:33.5px;line-height:33.5px;color:#4686bf;transform:scaleX(0.9227);">No significant focal lesion seen.</div><div class="r" style="left:735.8px;top:850px;width:8.3px;height:40px;background:transparent;border:3.4px solid #b5221f;border-left-width:4.2px;border-right:none;box-sizing:border-box;"></div><div class="r" style="left:1168.0px;top:850px;width:8.3px;height:40px;background:transparent;border:3.4px solid #b5221f;border-right-width:4.2px;border-left:none;box-sizing:border-box;"></div><div class="t" style="left:505.5px;top:925.5px;font-size:33.5px;line-height:33.5px;color:#4686bf;transform:scaleX(0.9334);">Kidneys:  </div><div class="t" style="left:642.8px;top:925.5px;font-size:33.5px;line-height:33.5px;color:#4686bf;transform:scaleX(0.9225);">No calculi, hydronephrosis, or suspicious focal lesions are seen.</div><div class="r" style="left:640.3px;top:922px;width:8.3px;height:40px;background:transparent;border:3.4px solid #b5221f;border-left-width:4.2px;border-right:none;box-sizing:border-box;"></div><div class="r" style="left:1515.6000000000001px;top:922px;width:8.3px;height:40px;background:transparent;border:3.4px solid #b5221f;border-right-width:4.2px;border-left:none;box-sizing:border-box;"></div><div class="t" style="left:505.5px;top:997.5px;font-size:33.5px;line-height:33.5px;color:#4686bf;transform:scaleX(0.9317);">Abdominal aorta and retroperitoneum:  </div><div class="t" style="left:1048.6px;top:997.5px;font-size:33.5px;line-height:33.5px;color:#4686bf;transform:scaleX(0.9130);">No aneurysm. No adenopathy.</div><div class="r" style="left:1046.1px;top:994px;width:8.3px;height:40px;background:transparent;border:3.4px solid #b5221f;border-left-width:4.2px;border-right:none;box-sizing:border-box;"></div><div class="r" style="left:1457.9px;top:994px;width:8.3px;height:40px;background:transparent;border:3.4px solid #b5221f;border-right-width:4.2px;border-left:none;box-sizing:border-box;"></div><div class="t" style="left:505.5px;top:1069.5px;font-size:33.5px;line-height:33.5px;color:#4686bf;transform:scaleX(0.9232);">Bowel and mesentery: </div><div class="t" style="left:820.1px;top:1069.5px;font-size:33.5px;line-height:33.5px;color:#4686bf;transform:scaleX(0.9225);">No dilated small or large bowel. No bowel wall thickening. No adenopathy.</div><div class="r" style="left:817.6px;top:1066px;width:8.3px;height:40px;background:transparent;border:3.4px solid #b5221f;border-left-width:4.2px;border-right:none;box-sizing:border-box;"></div><div class="r" style="left:1828.1000000000001px;top:1066px;width:8.3px;height:40px;background:transparent;border:3.4px solid #b5221f;border-right-width:4.2px;border-left:none;box-sizing:border-box;"></div><div class="t" style="left:505.5px;top:1141.5px;font-size:33.5px;line-height:33.5px;color:#4686bf;transform:scaleX(0.9418);">Appendix: </div><div class="t" style="left:654.6px;top:1141.5px;font-size:33.5px;line-height:33.5px;color:#4686bf;transform:scaleX(0.8962);">Normal.</div><div class="r" style="left:652.1px;top:1138px;width:8.3px;height:40px;background:transparent;border:3.4px solid #b5221f;border-left-width:4.2px;border-right:none;box-sizing:border-box;"></div><div class="r" style="left:756.4000000000001px;top:1138px;width:8.3px;height:40px;background:transparent;border:3.4px solid #b5221f;border-right-width:4.2px;border-left:none;box-sizing:border-box;"></div><div class="t" style="left:507.5px;top:1321.5px;font-size:33.5px;line-height:33.5px;color:#4686bf;transform:scaleX(0.9577);">PELVIS CT:</div><div class="t" style="left:505.5px;top:1393.5px;font-size:33.5px;line-height:33.5px;color:#4686bf;transform:scaleX(0.9280);">Reproductive organs:  </div><div class="t" style="left:818.3px;top:1393.5px;font-size:33.5px;line-height:33.5px;color:#4686bf;transform:scaleX(0.9159);">The uterus and adnexal regions are unremarkable.</div><div class="r" style="left:815.8px;top:1390px;width:8.3px;height:40px;background:transparent;border:3.4px solid #b5221f;border-left-width:4.2px;border-right:none;box-sizing:border-box;"></div><div class="r" style="left:1504.1000000000001px;top:1390px;width:8.3px;height:40px;background:transparent;border:3.4px solid #b5221f;border-right-width:4.2px;border-left:none;box-sizing:border-box;"></div><div class="t" style="left:505.5px;top:1465.5px;font-size:33.5px;line-height:33.5px;color:#4686bf;transform:scaleX(0.9212);">Urinary bladder:  </div><div class="t" style="left:742.2px;top:1465.5px;font-size:33.5px;line-height:33.5px;color:#4686bf;transform:scaleX(0.9229);">No significant focal lesion seen.</div><div class="r" style="left:739.7px;top:1462px;width:8.3px;height:40px;background:transparent;border:3.4px solid #b5221f;border-left-width:4.2px;border-right:none;box-sizing:border-box;"></div><div class="r" style="left:1172.0px;top:1462px;width:8.3px;height:40px;background:transparent;border:3.4px solid #b5221f;border-right-width:4.2px;border-left:none;box-sizing:border-box;"></div><div class="t" style="left:505.5px;top:1537.5px;font-size:33.5px;line-height:33.5px;color:#4686bf;transform:scaleX(0.9245);">Abdominal wall and osseous structures:  </div><div class="t" style="left:1068.4px;top:1537.5px;font-size:33.5px;line-height:33.5px;color:#4686bf;transform:scaleX(0.9205);">No hernia or other significant focal lesion seen.</div><div class="r" style="left:1065.9px;top:1534px;width:8.3px;height:40px;background:transparent;border:3.4px solid #b5221f;border-left-width:4.2px;border-right:none;box-sizing:border-box;"></div><div class="r" style="left:1706.2px;top:1534px;width:8.3px;height:40px;background:transparent;border:3.4px solid #b5221f;border-right-width:4.2px;border-left:none;box-sizing:border-box;"></div><svg class="r" style="left:506px;top:1246px;" width="30" height="42" viewBox="0 0 30 42"><path d="M7 2H2v36h5M19 2h5v36h-5" stroke="#b5221f" stroke-width="2.6" fill="none"/><path d="M9 37.500h2.500M13 37.500h2.500M17 37.500h1.500" stroke="#b5221f" stroke-width="2.200"/></svg><svg class="r" style="left:506px;top:1606px;" width="30" height="42" viewBox="0 0 30 42"><path d="M7 2H2v36h5M19 2h5v36h-5" stroke="#b5221f" stroke-width="2.6" fill="none"/><path d="M9 37.500h2.500M13 37.500h2.500M17 37.500h1.500" stroke="#b5221f" stroke-width="2.200"/></svg></div></div>
<div class="r" style="left:2052px;top:226px;width:542px;height:1724px;background:#bfc4d6;"></div>
<div class="r" style="left:2044px;top:226px;width:550px;height:50px;background:linear-gradient(#fdfdfd,#f3f3f3 70%,#e4e4e8);"></div>
<svg class="r" style="left:2058px;top:238px;" width="6" height="30" viewBox="0 0 6 30"><rect x="0" y="0" width="3.5" height="3.5" fill="#a0a0a0"/><rect x="0" y="7" width="3.5" height="3.5" fill="#a0a0a0"/><rect x="0" y="14" width="3.5" height="3.5" fill="#a0a0a0"/><rect x="0" y="21" width="3.5" height="3.5" fill="#a0a0a0"/></svg>
<div class="t" style="left:2071.0px;top:239.1px;font-size:24px;line-height:24px;color:#000;font-weight:700;transform:scaleX(1.0077);">Order Data</div>
<svg class="r" style="left:2571px;top:243px;" width="18" height="24" viewBox="0 0 18 24"><path d="M4 2.500h9M5.500 2.500v9M11.500 2.500v9M10 2.500v9M2 11.500h13M8.500 11.500v8.500" stroke="#000" stroke-width="2" fill="none"/></svg>
<div class="r" style="left:2076px;top:299px;width:502px;height:240px;background:#eeeff4;border-radius:8px 8px 0 0;"></div><div class="r" style="left:2076px;top:299px;width:502px;height:47px;background:linear-gradient(90deg,#ffffff 0,#f6f7fa 45%,#d6d9e4 100%);border-radius:8px 8px 0 0;"></div><div class="t" style="left:2105.5px;top:316.0px;font-size:23.5px;line-height:23.5px;color:#3a3d4e;font-weight:700;transform:scaleX(1.0144);">Patient</div><svg class="r" style="left:2535px;top:309px;" width="30" height="30" viewBox="0 0 30 30"><circle cx="15" cy="14" r="13" fill="#fff" stroke="#c9ccda" stroke-width="1.600"/><path d="M9.500 13l5.500-5 5.500 5M9.500 20l5.500-5 5.500 5" stroke="#1f2a55" stroke-width="2.200" fill="none"/></svg>
<div class="r" style="left:2076px;top:564px;width:502px;height:278px;background:#eeeff4;border-radius:8px 8px 0 0;"></div><div class="r" style="left:2076px;top:564px;width:502px;height:47px;background:linear-gradient(90deg,#ffffff 0,#f6f7fa 45%,#d6d9e4 100%);border-radius:8px 8px 0 0;"></div><div class="t" style="left:2105.5px;top:580.0px;font-size:23.5px;line-height:23.5px;color:#3a3d4e;font-weight:700;transform:scaleX(0.9722);">Exam</div><svg class="r" style="left:2535px;top:574px;" width="30" height="30" viewBox="0 0 30 30"><circle cx="15" cy="14" r="13" fill="#fff" stroke="#c9ccda" stroke-width="1.600"/><path d="M9.500 13l5.500-5 5.500 5M9.500 20l5.500-5 5.500 5" stroke="#1f2a55" stroke-width="2.200" fill="none"/></svg>
<div class="t" style="left:2106.0px;top:378.9px;font-size:22.5px;line-height:22.5px;color:#000;font-weight:700;transform:scaleX(1.0178);">Name:</div>
<div class="t" style="left:2267.0px;top:377.6px;font-size:24px;line-height:24px;color:#14142a;transform:scaleX(0.9316);">UNKNOWN</div>
<div class="t" style="left:2106.0px;top:416.9px;font-size:22.5px;line-height:22.5px;color:#000;font-weight:700;transform:scaleX(0.9705);">MRN:</div>
<div class="t" style="left:2267.0px;top:415.6px;font-size:24px;line-height:24px;color:#14142a;transform:scaleX(0.9104);">TEMPORARY</div>
<div class="t" style="left:2106.0px;top:454.9px;font-size:22.5px;line-height:22.5px;color:#000;font-weight:700;transform:scaleX(1.0198);">Dept Num:</div>
<div class="t" style="left:2267.0px;top:453.6px;font-size:24px;line-height:24px;color:#14142a;transform:scaleX(0.9104);">TEMPORARY</div>
<div class="t" style="left:2106.0px;top:492.9px;font-size:22.5px;line-height:22.5px;color:#000;font-weight:700;transform:scaleX(1.0254);">Site:</div>
<div class="t" style="left:2106.0px;top:641.9px;font-size:22.5px;line-height:22.5px;color:#000;font-weight:700;transform:scaleX(0.9829);">Accession:</div>
<div class="t" style="left:2267.0px;top:640.6px;font-size:24px;line-height:24px;color:#14142a;transform:scaleX(1.0102);">abcd12345</div>
<div class="t" style="left:2106.0px;top:679.9px;font-size:22.5px;line-height:22.5px;color:#000;font-weight:700;transform:scaleX(1.0270);">Procedure:</div>
<div class="t" style="left:2267.0px;top:678.6px;font-size:24px;line-height:24px;color:#14142a;transform:scaleX(1.0381);">4280079</div>
<div class="t" style="left:2106.0px;top:718.4px;font-size:22.5px;line-height:22.5px;color:#000;font-weight:700;transform:scaleX(1.0208);">Description:</div>
<div class="t" style="left:2267.0px;top:717.1px;font-size:24px;line-height:24px;color:#14142a;transform:scaleX(0.9500);">XR KNEE 3 VIEWS LEFT</div>
<div class="t" style="left:2106.0px;top:756.4px;font-size:22.5px;line-height:22.5px;color:#000;font-weight:700;transform:scaleX(1.0444);">Exam Date:</div>
<div class="t" style="left:2267.0px;top:755.1px;font-size:24px;line-height:24px;color:#14142a;transform:scaleX(1.0551);">3/12/2026 3:24 PM</div>
<div class="t" style="left:2106.0px;top:793.9px;font-size:22.5px;line-height:22.5px;color:#000;font-weight:700;transform:scaleX(1.0490);">Status:</div>
<div class="t" style="left:2267.0px;top:792.6px;font-size:24px;line-height:24px;color:#14142a;transform:scaleX(1.0320);">Temporary</div>
<div class="r" style="left:7px;top:1611px;width:2037px;height:58px;background:linear-gradient(#f3f3f3,#fbfbfb 40%,#f6f6f6);"></div>
<svg class="r" style="left:12px;top:1628px;" width="6" height="30" viewBox="0 0 6 30"><rect x="0" y="0" width="4" height="4" rx="1" fill="#a3a3a3"/><rect x="0" y="8" width="4" height="4" rx="1" fill="#a3a3a3"/><rect x="0" y="16" width="4" height="4" rx="1" fill="#a3a3a3"/><rect x="0" y="24" width="4" height="4" rx="1" fill="#a3a3a3"/></svg>
<div class="t" style="left:26.0px;top:1630.7px;font-size:24.5px;line-height:24.5px;color:#000;font-weight:700;transform:scaleX(1.0018);">AutoText (25)</div>
<svg class="r" style="left:2013px;top:1635px;" width="18" height="24" viewBox="0 0 18 24"><path d="M4 2.500h9M5.500 2.500v9M11.500 2.500v9M10 2.500v9M2 11.500h13M8.500 11.500v8.500" stroke="#000" stroke-width="2" fill="none"/></svg>
<div class="r" style="left:8px;top:1668px;width:814px;height:50px;background:#f7f7f7;"></div>
<svg class="r" style="left:12px;top:1677px;" width="6" height="30" viewBox="0 0 6 30"><rect x="0" y="0" width="3.5" height="3.5" fill="#b0b0b0"/><rect x="0" y="7" width="3.5" height="3.5" fill="#b0b0b0"/><rect x="0" y="14" width="3.5" height="3.5" fill="#b0b0b0"/><rect x="0" y="21" width="3.5" height="3.5" fill="#b0b0b0"/></svg>
<div class="t" style="left:31.5px;top:1679.6px;font-size:24.6px;line-height:24.6px;color:#000;transform:scaleX(0.8640);">List:</div>
<div class="r" style="left:88px;top:1669px;width:259px;height:46px;background:#fff;border:1.5px solid #8a8a8a;border-radius:4px;box-sizing:border-box;"></div>
<div class="t" style="left:99.0px;top:1679.6px;font-size:24.6px;line-height:24.6px;color:#111;transform:scaleX(0.9296);">All Personal</div>
<svg class="r" style="left:320px;top:1685px;" width="20" height="14" viewBox="0 0 20 14"><path d="M2 3l8 8 8-8" stroke="#444" stroke-width="1.8" fill="none"/></svg>
<div class="t" style="left:358.0px;top:1679.6px;font-size:24.6px;line-height:24.6px;color:#000;transform:scaleX(0.9179);">Name:</div>
<div class="r" style="left:442px;top:1670px;width:200px;height:45px;background:#fff;border:2px solid #6d6d6d;box-sizing:border-box;"></div>
<svg class="r" style="left:648px;top:1676px;" width="34" height="34" viewBox="0 0 34 34"><circle cx="13" cy="13" r="9.5" fill="#f4f8fb" stroke="#555" stroke-width="2"/><path d="M20 20l9 9" stroke="#555" stroke-width="3.5" stroke-linecap="round"/></svg>
<div class="t" style="left:687.0px;top:1679.6px;font-size:24.6px;line-height:24.6px;color:#000;transform:scaleX(0.8720);">Search</div>
<div class="r" style="left:775px;top:1678px;width:1.5px;height:30px;background:#c8c8c8;"></div>
<svg class="r" style="left:798px;top:1694px;" width="22" height="20" viewBox="0 0 22 20"><rect x="0" y="0" width="22" height="20" rx="3" fill="#d9d9d9"/><path d="M5 5h12M5 9h12" stroke="#000" stroke-width="2"/><path d="M5 11h12l-6 6z" fill="#000"/></svg>
<div class="r" style="left:8px;top:1719px;width:812px;height:231px;background:#fff;border-top:2px solid #c9c9c9;border-right:2px solid #c5c5c5;box-sizing:border-box;"></div>
<div class="r" style="left:10px;top:1721px;width:772px;height:38px;background:linear-gradient(#fbfcfe,#eff3f9 50%,#dde5f1);border-bottom:2px solid #a3b9db;box-sizing:border-box;"></div>
<div class="r" style="left:56px;top:1721px;width:2px;height:218px;background:#e1e8f8;"></div>
<div class="r" style="left:104px;top:1721px;width:2px;height:218px;background:#e1e8f8;"></div>
<div class="r" style="left:56px;top:1723px;width:2px;height:34px;background:#b3c4de;"></div>
<div class="r" style="left:104px;top:1723px;width:2px;height:34px;background:#b3c4de;"></div>
<div class="t" style="left:115.0px;top:1727.9px;font-size:22.5px;line-height:22.5px;color:#111;transform:scaleX(0.8822);">Name</div>
<div class="r" style="left:10px;top:1867px;width:772px;height:36px;background:#e8e6dc;"></div>
<div class="r" style="left:56px;top:1867px;width:2px;height:36px;background:#dcdad0;"></div>
<div class="r" style="left:104px;top:1867px;width:2px;height:36px;background:#dcdad0;"></div>
<div class="t" style="left:113.5px;top:1766.9px;font-size:22.5px;line-height:22.5px;color:#151515;transform:scaleX(0.9289);">Chest 1 - paragraph with fields</div>
<div class="r" style="left:10px;top:1794.5px;width:772px;height:1.5px;background:#dfe7f7;"></div>
<svg class="r" style="left:18px;top:1761px;" width="30" height="34" viewBox="0 0 30 34"><path d="M5 31.500q-2.500 0-2.500-3v-4.500q0-2 2-3.500l5.500-4.500h10l5.500 4.500q2 1.500 2 3.500v4.500q0 3-2.500 3z" fill="url(#gBody)" stroke="#4a98ee" stroke-width="2.200"/><circle cx="15" cy="10.500" r="8.300" fill="url(#gHead)" stroke="#d8a030" stroke-width="2.400"/></svg>
<div class="t" style="left:113.5px;top:1802.8px;font-size:22.5px;line-height:22.5px;color:#151515;transform:scaleX(0.9275);">Chest 1 - picklists</div>
<div class="r" style="left:10px;top:1830.5px;width:772px;height:1.5px;background:#dfe7f7;"></div>
<svg class="r" style="left:18px;top:1797px;" width="30" height="34" viewBox="0 0 30 34"><path d="M5 31.500q-2.500 0-2.500-3v-4.500q0-2 2-3.500l5.500-4.500h10l5.500 4.500q2 1.500 2 3.500v4.500q0 3-2.500 3z" fill="url(#gBody)" stroke="#4a98ee" stroke-width="2.200"/><circle cx="15" cy="10.500" r="8.300" fill="url(#gHead)" stroke="#d8a030" stroke-width="2.400"/></svg>
<div class="t" style="left:113.5px;top:1838.7px;font-size:22.5px;line-height:22.5px;color:#151515;transform:scaleX(0.9392);">CT abdomen pelvis - blanks</div>
<div class="r" style="left:10px;top:1866.5px;width:772px;height:1.5px;background:#dfe7f7;"></div>
<svg class="r" style="left:18px;top:1833px;" width="30" height="34" viewBox="0 0 30 34"><path d="M5 31.500q-2.500 0-2.500-3v-4.500q0-2 2-3.500l5.500-4.500h10l5.500 4.500q2 1.500 2 3.500v4.500q0 3-2.500 3z" fill="url(#gBody)" stroke="#4a98ee" stroke-width="2.200"/><circle cx="15" cy="10.500" r="8.300" fill="url(#gHead)" stroke="#d8a030" stroke-width="2.400"/></svg>
<div class="t" style="left:113.5px;top:1874.6px;font-size:22.5px;line-height:22.5px;color:#151515;transform:scaleX(0.9305);">CT abdomen pelvis - female</div>
<div class="r" style="left:10px;top:1902.5px;width:772px;height:1.5px;background:#dfe7f7;"></div>
<svg class="r" style="left:18px;top:1869px;" width="30" height="34" viewBox="0 0 30 34"><path d="M5 31.500q-2.500 0-2.500-3v-4.500q0-2 2-3.500l5.500-4.500h10l5.500 4.500q2 1.500 2 3.500v4.500q0 3-2.500 3z" fill="url(#gBody)" stroke="#4a98ee" stroke-width="2.200"/><circle cx="15" cy="10.500" r="8.300" fill="url(#gHead)" stroke="#d8a030" stroke-width="2.400"/></svg>
<div class="t" style="left:113.5px;top:1910.5px;font-size:22.5px;line-height:22.5px;color:#151515;transform:scaleX(0.9297);">CT abdomen pelvis - formatting</div>
<div class="r" style="left:10px;top:1938.5px;width:772px;height:1.5px;background:#dfe7f7;"></div>
<svg class="r" style="left:18px;top:1905px;" width="30" height="34" viewBox="0 0 30 34"><path d="M5 31.500q-2.500 0-2.500-3v-4.500q0-2 2-3.500l5.500-4.500h10l5.500 4.500q2 1.500 2 3.500v4.500q0 3-2.500 3z" fill="url(#gBody)" stroke="#4a98ee" stroke-width="2.200"/><circle cx="15" cy="10.500" r="8.300" fill="url(#gHead)" stroke="#d8a030" stroke-width="2.400"/></svg>
<div class="r" style="left:784px;top:1721px;width:34px;height:229px;background:#f0f0f0;"></div>
<div class="r" style="left:798px;top:1784px;width:4px;height:33px;background:#8a8a8a;"></div>
<svg class="r" style="left:0;top:0" width="120" height="1760" viewBox="0 0 120 1760"><path d="M48.4 1735.2L48.4 1738.8L44.3 1739.3L42.7 1743.0L45.3 1746.3L42.8 1748.8L39.5 1746.2L35.8 1747.8L35.3 1751.9L31.7 1751.9L31.2 1747.8L27.5 1746.2L24.2 1748.8L21.7 1746.3L24.3 1743.0L22.7 1739.3L18.6 1738.8L18.6 1735.2L22.7 1734.7L24.3 1731.0L21.7 1727.7L24.2 1725.2L27.5 1727.8L31.2 1726.2L31.7 1722.1L35.3 1722.1L35.8 1726.2L39.5 1727.8L42.8 1725.2L45.3 1727.7L42.7 1731.0L44.3 1734.7z" fill="#e9e9ee" stroke="#c2c2cc" stroke-width="1.500" stroke-linejoin="round"/><circle cx="33.500" cy="1737" r="5" fill="#f6f6fa" stroke="#c2c2cc" stroke-width="1.500"/><rect x="68" y="1728.5" width="2.200" height="2.200" fill="#111"/><rect x="72" y="1728.5" width="2.200" height="2.200" fill="#111"/><rect x="68" y="1732.5" width="2.200" height="2.200" fill="#111"/><rect x="68" y="1736.5" width="2.200" height="2.200" fill="#111"/><rect x="68" y="1740.5" width="2.200" height="2.200" fill="#111"/><rect x="68" y="1744.5" width="2.200" height="2.200" fill="#111"/><rect x="72" y="1744.5" width="2.200" height="2.200" fill="#111"/><rect x="77" y="1729.500" width="16" height="15.500" fill="#e4e4e4" stroke="#111" stroke-width="2.200"/><path d="M72 1737h16M83 1731.500l6 5.500-6 5.500z" stroke="#000" stroke-width="2" fill="#000"/></svg>
<div class="r" style="left:826px;top:1669px;width:1218px;height:281px;background:linear-gradient(#6d778b,#7a849a 10px,#7f899e);"></div>
<div class="r" style="left:833px;top:1676px;width:1206px;height:280px;background:#fff;border:3px solid #0c0c0c;box-sizing:border-box;"></div>
<div class="r" style="left:1995px;top:1684px;width:31px;height:266px;background:#f1f1f1;"></div>
<div class="r" style="left:2008px;top:1720px;width:4.5px;height:33px;background:#8a8a8a;"></div>
<div class="t" style="left:847.0px;top:1724.1px;font-size:33.5px;line-height:33.5px;color:#1c1c1c;transform:scaleX(0.8925);">Clinical History:</div>
<svg class="r" style="left:1055px;top:1720px;" width="40" height="42" viewBox="0 0 40 42"><path d="M9.500 3H4v35h5.500M25 3h5.500v35H25" stroke="#b5221f" stroke-width="3.200" fill="none"/></svg>
<div class="t" style="left:847.0px;top:1795.5px;font-size:33.5px;line-height:33.5px;color:#1c1c1c;transform:scaleX(0.9247);">TECHNIQUE:   Axial images were obtained through the abdomen and pelvis, from</div>
<div class="t" style="left:847.0px;top:1831.5px;font-size:33.5px;line-height:33.5px;color:#1c1c1c;transform:scaleX(0.9103);">the bases of the lungs through the pubic symphysis, following the intravenous</div>
<div class="t" style="left:847.0px;top:1867.5px;font-size:33.5px;line-height:33.5px;color:#1c1c1c;transform:scaleX(0.9251);">administration of contrast.  Sagittal and coronal MPR reconstructions were</div>
<div class="t" style="left:847.0px;top:1903.5px;font-size:33.5px;line-height:33.5px;color:#1c1c1c;transform:scaleX(0.9255);">performed.</div>
<svg class="r" style="left:0px;top:940px;" width="420" height="360" viewBox="0 0 420 360"><rect x="7" y="251" width="252" height="82" fill="none" stroke="#e20a0a" stroke-width="10"/><path d="M386 30.5L234 211" stroke="#e20a0a" stroke-width="21" stroke-linecap="round" fill="none"/><path d="M234.4 160.3L218.5 226L280 199.3L240 206Z" fill="#e20a0a" stroke="#e20a0a" stroke-width="8.8" stroke-linejoin="round"/></svg>
</body></html>
